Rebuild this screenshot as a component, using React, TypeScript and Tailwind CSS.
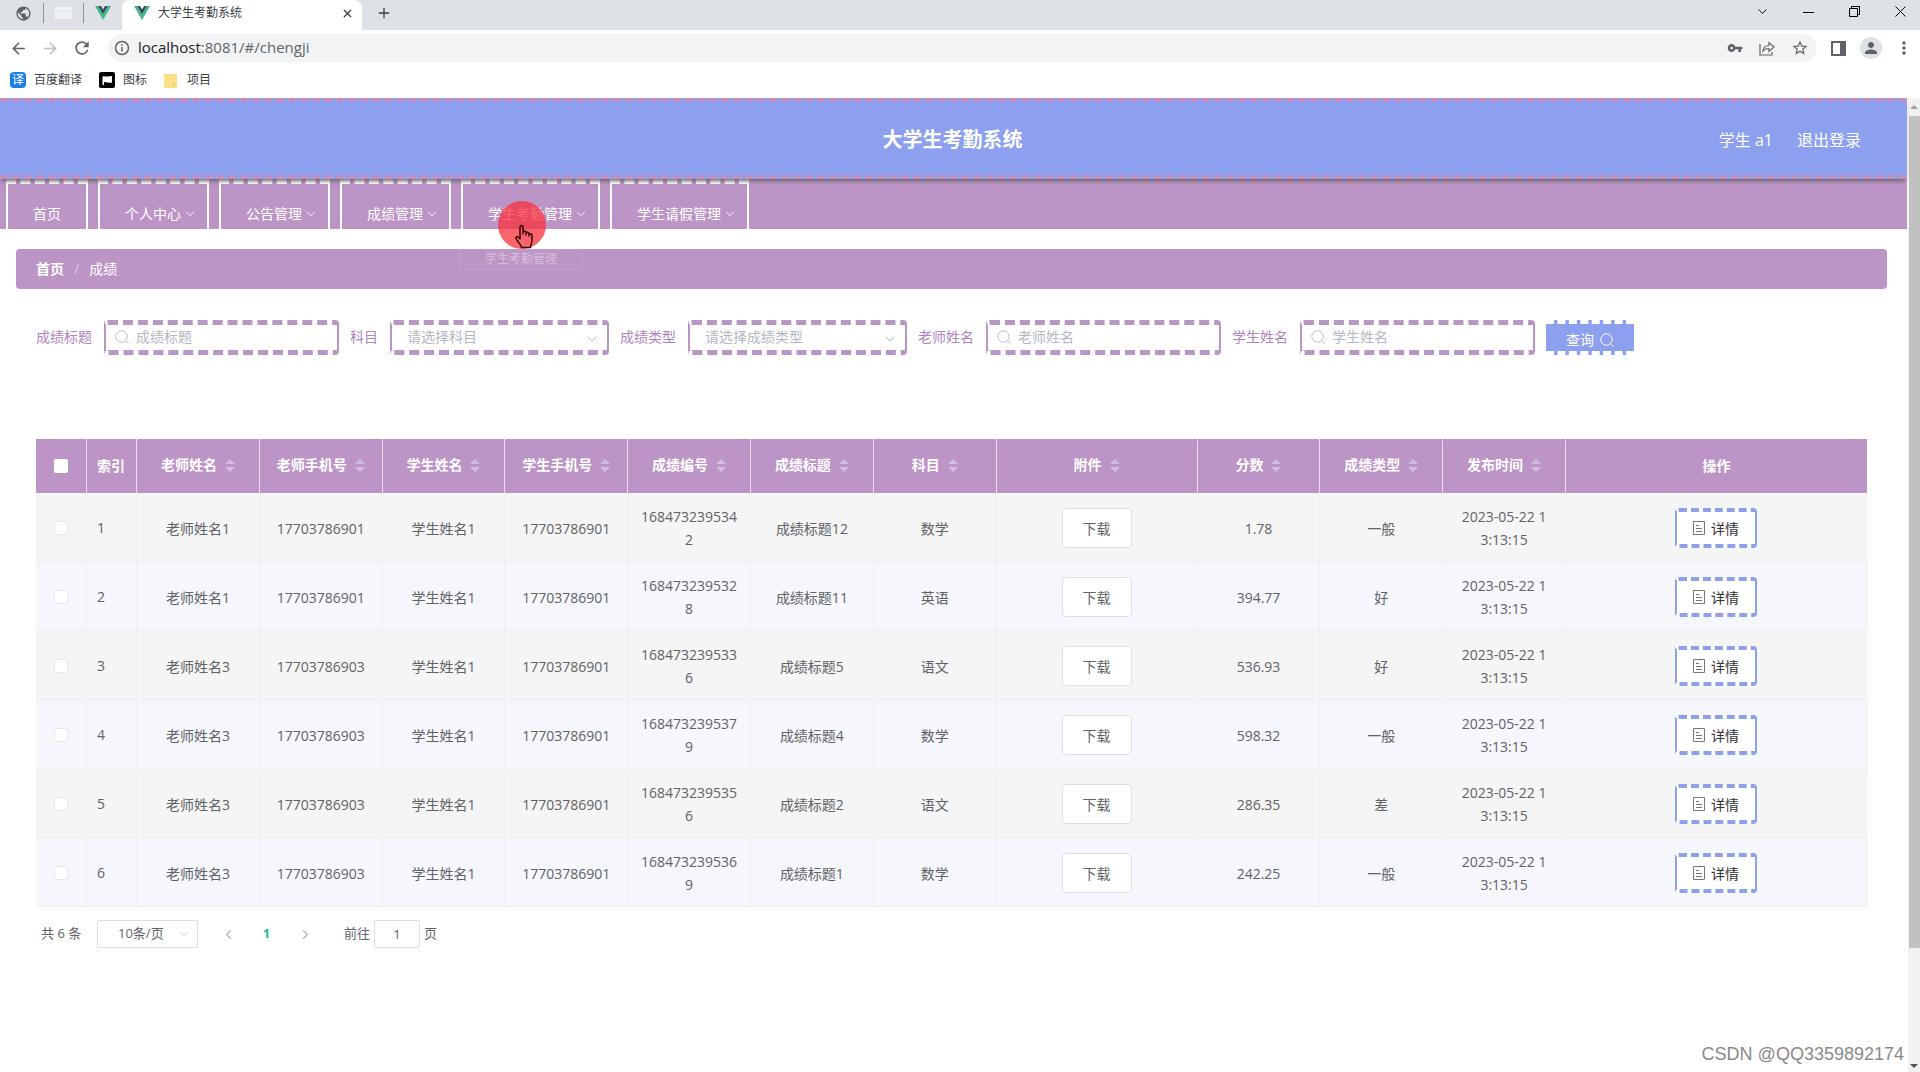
import { ChevronDown, ChevronLeft, ChevronRight, Plus, X } from 'lucide-react'
import { MdArrowBack, MdArrowForward, MdMoreVert, MdPerson, MdPublic, MdRefresh, MdStarBorder, MdVpnKey } from 'react-icons/md'

const NAV_ITEMS = ['个人中心', '公告管理', '成绩管理', '学生考勤管理', '学生请假管理']
const ACTIVE_NAV = '学生考勤管理'

const COLUMNS = ['老师姓名', '老师手机号', '学生姓名', '学生手机号', '成绩编号', '成绩标题', '科目', '附件', '分数', '成绩类型', '发布时间']

const ROWS = [
  { teacher: '老师姓名1', phone: '17703786901', code: '1684732395342', title: '成绩标题12', subject: '数学', score: '1.78', grade: '一般' },
  { teacher: '老师姓名1', phone: '17703786901', code: '1684732395328', title: '成绩标题11', subject: '英语', score: '394.77', grade: '好' },
  { teacher: '老师姓名3', phone: '17703786903', code: '1684732395336', title: '成绩标题5', subject: '语文', score: '536.93', grade: '好' },
  { teacher: '老师姓名3', phone: '17703786903', code: '1684732395379', title: '成绩标题4', subject: '数学', score: '598.32', grade: '一般' },
  { teacher: '老师姓名3', phone: '17703786903', code: '1684732395356', title: '成绩标题2', subject: '语文', score: '286.35', grade: '差' },
  { teacher: '老师姓名3', phone: '17703786903', code: '1684732395369', title: '成绩标题1', subject: '数学', score: '242.25', grade: '一般' },
]

const TD = 'h-[69px] border-b border-r border-[#eeeff4] pt-0.5 text-center leading-[23px] break-all'
const TH = 'h-[54px] border-r border-[#ebdff0] text-center font-bold'
const FIELD = 'block h-[35px] rounded border-x-2 border-y-[5px] border-[#b897c4] bg-white text-sm text-[#606266] [border-style:dashed_solid] outline-none'
const WINDOW_BUTTON = 'flex h-3.5 w-[46px] items-center justify-center'

function VueLogo() {
  return (
    <svg width="16" height="14" viewBox="0 0 16 14">
      <path d="M0 0h3.2L8 8.2 12.8 0H16L8 14z" fill="#41b883" />
      <path d="M3.2 0H6l2 3.500L10 0h2.8L8 8.2z" fill="#35495e" />
    </svg>
  )
}

function SearchIcon({ className }: { className?: string }) {
  return (
    <svg width="14" height="14" viewBox="0 0 14 14" fill="none" stroke="currentColor" className={className}>
      <circle cx="6.500" cy="6.500" r="5.700" />
      <path d="M10.500 10.500l3 3" />
    </svg>
  )
}

function BrowserTabs() {
  return (
    <div className="flex h-[30px] items-stretch bg-[#dee1e6] text-[#3c4043]">
      <div className="flex w-[122px] items-center pb-1">
        <span className="flex w-[43px] justify-center pl-1">
          <MdPublic size={17} className="text-[#5f6368]" />
        </span>
        <span className="h-5 w-px bg-[#909398]" />
        <span className="flex w-[39px] justify-center">
          <svg width="17" height="12" viewBox="0 0 17 12">
            <path d="M0 0h17v12H0z" fill="#f1f3f6" />
            <path d="M0 4h17M9 4v8" stroke="#dfe3ea" />
          </svg>
        </span>
        <span className="h-5 w-px bg-[#909398]" />
        <span className="flex w-[38px] justify-center"><VueLogo /></span>
      </div>
      <div className="flex w-[240px] items-center rounded-t-lg bg-white pr-2 pb-1 pl-3 text-xs">
        <VueLogo />
        <span className="ml-2 flex-1">大学生考勤系统</span>
        <button aria-label="关闭标签页"><X size={13} strokeWidth={2.5} /></button>
      </div>
      <button aria-label="新标签页" className="px-3.5 pb-1"><Plus size={16} /></button>
      <div className="-mr-[3px] ml-auto flex items-start pt-1 text-black">
        <button aria-label="搜索标签页" className={WINDOW_BUTTON}><ChevronDown size={15} strokeWidth={1.5} /></button>
        <button aria-label="最小化" className={WINDOW_BUTTON}>
          <svg width="11" height="11"><path d="M0 6.500h11" stroke="currentColor" /></svg>
        </button>
        <button aria-label="还原" className={WINDOW_BUTTON}>
          <svg width="11" height="11" fill="none" stroke="currentColor"><path d="M.5 2.500h8v8h-8zM2.500 2.500v-2h8v8h-2" /></svg>
        </button>
        <button aria-label="关闭" className={WINDOW_BUTTON}>
          <svg width="11" height="11" stroke="currentColor"><path d="M.5 .5l10 10M10.500 .5l-10 10" /></svg>
        </button>
      </div>
    </div>
  )
}

function BrowserToolbar() {
  return (
    <div className="flex h-9 items-center bg-white pr-2 text-[#5f6368]">
      <button aria-label="后退" className="flex w-9 justify-center"><MdArrowBack size={19} /></button>
      <button aria-label="前进" className="flex w-7 justify-center text-[#bdc1c6]"><MdArrowForward size={19} /></button>
      <button aria-label="刷新" className="flex w-9 justify-center"><MdRefresh size={20} /></button>
      <div className="ml-2 flex h-7 flex-1 items-center rounded-full bg-[#f1f3f4] pr-2 pl-1.5">
        <svg width="16" height="16" viewBox="0 0 16 16" fill="none" stroke="currentColor" strokeWidth="1.500">
          <circle cx="8" cy="8" r="6.500" />
          <path d="M8 7v4.500M8 4.200v1.600" />
        </svg>
        <span className="ml-2 flex-1 pb-0.5 text-[15px]">
          <span className="text-[#202124]">localhost</span>:8081/#/chengji
        </span>
        <div className="flex items-center gap-4">
          <button aria-label="密码"><MdVpnKey size={16} /></button>
          <button aria-label="分享">
            <svg width="16" height="16" viewBox="0 0 16 16" fill="none" stroke="currentColor" strokeWidth="1.200">
              <path d="M1 4v11h12v-3" />
              <path d="M4 11c.5-4 3-5.500 6-5.500V2.500L15 7l-5 4.500V8.500c-3 0-4.500 .5-6 2.500z" />
            </svg>
          </button>
          <button aria-label="收藏"><MdStarBorder size={18} /></button>
        </div>
      </div>
      <div className="ml-3.5 flex items-center gap-3.5">
        <button aria-label="侧边栏">
          <svg width="15" height="15" viewBox="0 0 15 15">
            <path d="M1 1h13v13H1z" fill="none" stroke="currentColor" strokeWidth="2" />
            <path d="M9 1h5v13H9z" fill="currentColor" />
          </svg>
        </button>
        <button aria-label="用户" className="flex size-[22px] items-center justify-center rounded-full bg-[#dfe1e8]"><MdPerson size={18} /></button>
        <button aria-label="菜单" className="flex w-4 justify-center"><MdMoreVert size={20} className="shrink-0" /></button>
      </div>
    </div>
  )
}

function Bookmarks() {
  return (
    <div className="flex h-8 items-center gap-[17px] bg-white pb-1 pl-2.5 text-xs text-[#3c4043]">
      <a href="#fanyi" className="flex items-center gap-2">
        <span className="flex size-4 items-center justify-center rounded-sm bg-[#1a7fe8] text-xs leading-4 text-white">译</span>
        百度翻译
      </a>
      <a href="#icons" className="flex items-center gap-2">
        <svg width="16" height="16" viewBox="0 0 16 16">
          <rect width="16" height="16" rx="2" />
          <path d="M3.500 13V4.500c2-1 3 .5 5 0l4.500-.5v6.500c-2 1-4-.5-8-.5v3z" fill="#fff" />
        </svg>
        图标
      </a>
      <a href="#project" className="flex items-center gap-2.5">
        <svg width="13" height="15" viewBox="0 0 13 15">
          <path d="M0 1h13v14H0z" fill="#fbe087" />
          <path d="M9 15v-4h4" fill="none" stroke="#edc95a" />
        </svg>
        项目
      </a>
    </div>
  )
}

function Nav() {
  return (
    <nav className="flex h-[50px] gap-[10px] bg-[#bc94c6] pl-1.5 text-sm text-white">
      <a href="#home" className="flex items-center border-x-2 border-t-[5px] border-white px-[25px] pt-3.5 [border-style:dashed_solid_none]">首页</a>
      {NAV_ITEMS.map(item => (
        <a key={item} href={`#${item}`} className="relative flex items-center border-x-2 border-t-[5px] border-white pt-3.5 pr-[10px] pl-[25px] [border-style:dashed_solid_none]">
          {item}
          <ChevronDown size={14} strokeWidth={1.5} className="ml-0.5" />
          {item === ACTIVE_NAV && <NavPopup />}
        </a>
      ))}
    </nav>
  )
}

// submenu as it starts to unfold, with the pointer over its parent item
function NavPopup() {
  return (
    <>
      <span className="absolute top-[65px] -left-1 z-10 flex h-[21px] w-[124px] justify-center border border-white/10 text-xs leading-[18px] text-white/40">
        学生考勤管理
      </span>
      <span className="absolute top-[17px] left-[35px] z-20 flex size-12 items-end justify-center rounded-full bg-[#f8303c]/75">
        <svg width="20" height="25" viewBox="0 0 20 25" fill="none" stroke="#3a0508" strokeWidth="1.500" strokeLinejoin="round" className="ml-1">
          <path d="M6 15V3c0-2 3-2 3 0v7-1.500c0-2 3-2 3 0V11 9.500c0-2 3-1.500 3 .3V12v-1c0-2 3-1.500 3 .5V17c0 2-1.500 3-1.500 6.500h-9C7 20 3 17.500 2 14.500c-.5-1.500 1-2.500 2-1.500z" />
        </svg>
      </span>
    </>
  )
}

function TextField({ label, id }: { label: string; id: string }) {
  return (
    <div className="flex items-center gap-3">
      <label htmlFor={id} className="pb-0.5">{label}</label>
      <div className="relative">
        <SearchIcon className="absolute top-[10px] left-[11px] text-[#b9bdc6]" />
        <input id={id} placeholder={label} className={`${FIELD} w-[235px] pb-0.5 pl-[30px] placeholder:text-[#b4b8c0]`} />
      </div>
    </div>
  )
}

function SelectField({ label, id }: { label: string; id: string }) {
  return (
    <div className="flex items-center gap-3">
      <label htmlFor={id} className="pb-0.5">{label}</label>
      <div className="relative">
        <select id={id} className={`${FIELD} w-[219px] appearance-none pb-0.5 pl-[15px] text-[#b4b8c0]`}>
          <option>请选择{label}</option>
        </select>
        <ChevronDown size={16} strokeWidth={1.5} className="pointer-events-none absolute top-[11px] right-[9px] text-[#b9bdc6]" />
      </div>
    </div>
  )
}

function SortCaret() {
  return (
    <svg width="10" height="13" viewBox="0 0 10 13" fill="#d0bddf" className="ml-2">
      <path d="M5 0l5 5H0zM5 13l5-5H0z" />
    </svg>
  )
}

function GradeTable() {
  return (
    <table className="w-full table-fixed border-separate border-spacing-0 text-sm text-[#606266]">
      <colgroup>
        <col className="w-[51px]" />
        <col className="w-[50px]" />
        {COLUMNS.map(c => <col key={c} className={c === '附件' ? 'w-[201px]' : undefined} />)}
        <col className="w-[301px]" />
      </colgroup>
      <thead className="bg-[#bc94c6] text-white">
        <tr>
          <th className={TH}>
            <input type="checkbox" aria-label="全选" className="mx-auto block size-3.5 appearance-none rounded-xs bg-white" />
          </th>
          <th className={`${TH} pl-[10px] text-left`}>索引</th>
          {COLUMNS.map(c => (
            <th key={c} className={TH}>
              <span className="flex items-center justify-center pb-0.5">{c}<SortCaret /></span>
            </th>
          ))}
          <th className="text-center font-bold">操作</th>
        </tr>
      </thead>
      <tbody>
        {ROWS.map((row, i) => (
          <tr key={row.code} className="odd:bg-[#f5f5f5] even:bg-[#f5f7fd]">
            <td className={`${TD} px-[10px]`}>
              <input type="checkbox" aria-label={`选择第${i + 1}行`} className="mx-auto block size-3.5 appearance-none rounded-xs border border-[#e6e8ee] bg-white" />
            </td>
            <td className="border-r border-b border-[#eeeff4] pt-0.5 pl-[10px]">{i + 1}</td>
            <td className={`${TD} px-[10px]`}>{row.teacher}</td>
            <td className={`${TD} px-[10px]`}>{row.phone}</td>
            <td className={`${TD} px-[10px]`}>学生姓名1</td>
            <td className={`${TD} px-[10px]`}>17703786901</td>
            <td className={`${TD} px-[10px]`}>{row.code}</td>
            <td className={`${TD} px-[10px]`}>{row.title}</td>
            <td className={`${TD} px-[10px]`}>{row.subject}</td>
            <td className={`${TD} px-[10px]`}>
              <button className="h-10 rounded border border-[#dcdfe6] bg-white px-5 align-middle">下载</button>
            </td>
            <td className={`${TD} px-[10px]`}>{row.score}</td>
            <td className={`${TD} px-[10px]`}>{row.grade}</td>
            <td className={`${TD} px-4`}>2023-05-22 13:13:15</td>
            <td className={`${TD} px-[10px]`}>
              <button className="inline-flex h-10 items-center gap-1.5 rounded border-x-2 border-y-4 border-[#8fa0ea] bg-white px-4 align-middle text-[#333] [border-style:dashed_solid]">
                <svg width="12" height="14" viewBox="0 0 12 14" fill="none" stroke="#777">
                  <path d="M.5 .5h11v13H.5zM3 4.500h3M3 7.500h6M3 10.500h6" />
                </svg>
                详情
              </button>
            </td>
          </tr>
        ))}
      </tbody>
    </table>
  )
}

function Pagination() {
  return (
    <div className="mt-[13px] flex h-7 items-center pl-[5px] text-[13px] text-[#606266]">
      <span className="w-14">共 6 条</span>
      <div className="relative">
        <select aria-label="每页条数" className="h-7 w-[101px] appearance-none rounded-xs border border-[#dcdfe6] bg-white pl-5 outline-none">
          <option>10条/页</option>
        </select>
        <ChevronDown size={12} className="pointer-events-none absolute top-2 right-2 text-[#c8ccd4]" />
      </div>
      <div className="mx-[10px] flex items-center">
        <button aria-label="上一页" className="flex w-10 justify-center text-[#b0b4bc]"><ChevronLeft size={15} /></button>
        <button className="w-[37px] font-bold text-[#18c08f]">1</button>
        <button aria-label="下一页" className="flex w-10 justify-center text-[#b0b4bc]"><ChevronRight size={15} /></button>
      </div>
      <label htmlFor="page" className="ml-[9px]">前往</label>
      <input id="page" defaultValue="1" className="mx-1 h-7 w-[46px] rounded-xs border border-[#dcdfe6] text-center outline-none" />
      <span>页</span>
    </div>
  )
}

function Scrollbar() {
  return (
    <div className="flex w-[13px] flex-col items-center border-l border-white bg-[#f1f1f1]">
      <svg width="8" height="18" viewBox="0 0 8 18"><path d="M0 11l4-4 4 4z" fill="#a3a3a3" /></svg>
      <div className="ml-px w-full grow-[832] bg-[#c1c1c1]" />
      <div className="grow-[107]" />
      <svg width="8" height="17" viewBox="0 0 8 17"><path d="M0 9l4 4 4-4z" fill="#505050" /></svg>
    </div>
  )
}

export default function App() {
  return (
    <div className="relative flex h-screen flex-col overflow-hidden bg-white font-['Open_Sans','Noto_Sans_CJK_SC',sans-serif]">
      <BrowserTabs />
      <BrowserToolbar />
      <Bookmarks />
      <div className="flex min-h-0 flex-1">
        <div className="min-w-0 flex-1">
          <header className="relative z-10 grid h-[81px] grid-cols-3 items-center border-y-4 border-dashed border-[#c48fc0] bg-[#8ca0ef] pt-0.5 pr-[46px] text-white shadow-[0_4px_4px_-2px_#666]">
            <h1 className="col-start-2 pl-11 text-center text-xl font-bold">大学生考勤系统</h1>
            <div className="flex justify-end gap-6">
              <span>学生 a1</span>
              <a href="#logout">退出登录</a>
            </div>
          </header>
          <Nav />
          <main className="pt-5 pr-5 pl-4">
            <div className="flex h-10 items-center rounded bg-[#bc94c6] px-5 text-sm text-white">
              <a href="#home" className="font-bold">首页</a>
              <span className="mx-[10px] text-[#d9c6e2]">/</span>
              <span>成绩</span>
            </div>
            <div className="px-5">
              <form className="mt-[31px] flex h-[35px] items-center gap-[11px] text-sm text-[#b083bf]">
                <TextField id="title" label="成绩标题" />
                <SelectField id="subject" label="科目" />
                <SelectField id="grade" label="成绩类型" />
                <TextField id="teacher" label="老师姓名" />
                <TextField id="student" label="学生姓名" />
                <button type="button" className="flex h-[35px] w-[88px] items-center justify-center gap-1.5 border-y-4 border-dashed border-white bg-[#8ca0ef] pt-1 text-white">
                  查询 <SearchIcon />
                </button>
              </form>
              <div className="mt-[84px]">
                <GradeTable />
                <Pagination />
              </div>
            </div>
          </main>
        </div>
        <Scrollbar />
      </div>
      <p className="absolute right-4 bottom-1 font-['Liberation_Sans',sans-serif] text-lg text-[#8a8a8a]">CSDN @QQ3359892174</p>
    </div>
  )
}
